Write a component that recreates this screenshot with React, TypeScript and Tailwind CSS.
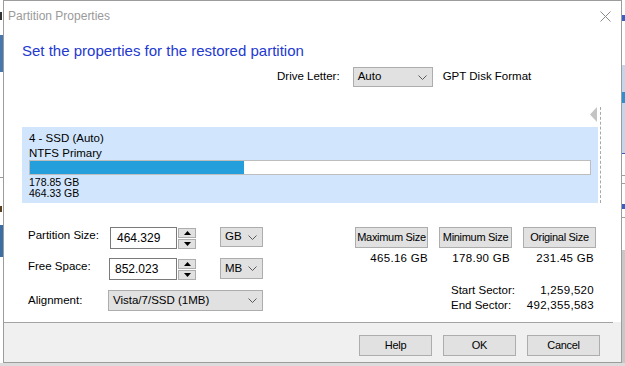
import React from "react";

function Chevron() {
  return (
    <svg width="9" height="5" viewBox="0 0 9 5" className="shrink-0">
      <path d="M0.5 0.5 L4.5 4.5 L8.5 0.5" fill="none" stroke="#5a5a5a" strokeWidth="1" />
    </svg>
  );
}

function Combo({ text, w, h }: { text: string; w: string; h: string }) {
  return (
    <div className={`${w} ${h} flex items-center justify-between pl-[4px] pr-[5px] bg-[#e1e1e1] border border-[#adadad] text-black whitespace-nowrap`}>
      <span>{text}</span>
      <Chevron />
    </div>
  );
}

function Spinner() {
  return (
    <div className="flex flex-col gap-[1px] self-center ml-[1px]">
      <div className="w-[18px] h-[10px] bg-[#e1e1e1] border border-[#adadad] flex items-center justify-center">
        <svg width="7" height="4" viewBox="0 0 7 4">
          <polygon points="0,4 3.5,0 7,4" fill="#000" />
        </svg>
      </div>
      <div className="w-[18px] h-[10px] bg-[#e1e1e1] border border-[#adadad] flex items-center justify-center">
        <svg width="7" height="4" viewBox="0 0 7 4">
          <polygon points="0,0 3.5,4 7,0" fill="#000" />
        </svg>
      </div>
    </div>
  );
}

function Btn({ text }: { text: string }) {
  return (
    <div className="w-[73px] h-[21px] flex items-center justify-center bg-[#e1e1e1] border border-[#adadad] text-black whitespace-nowrap text-[11px] tracking-[-0.3px]">
      {text}
    </div>
  );
}

export default function App() {
  return (
    <div className="w-[625px] h-[366px] flex flex-col bg-white overflow-hidden font-['Liberation_Sans',Arial,sans-serif] text-[11.5px] text-black leading-none">
      <div className="flex h-[363px]">
        {/* left background strip */}
        <div className="w-[3px] flex flex-col bg-white">
          <div className="h-[12px]" />
          <div className="h-[8px] w-[2px] bg-[#333]" />
          <div className="h-[15px]" />
          <div className="h-[37px] bg-[#4677ad]" />
          <div className="h-[105px]" />
          <div className="h-[1px] bg-[#9a9a9a]" />
          <div className="h-[28px]" />
          <div className="h-[6px] w-[2px] bg-[#5a4020]" />
          <div className="h-[13px]" />
          <div className="h-[32px] bg-[#3c6ea6]" />
          <div className="flex-1" />
        </div>

        {/* dialog */}
        <div className="w-[619px] h-[363px] flex flex-col border border-[#9c9c9c] bg-white">
          {/* title bar */}
          <div className="h-[29px] flex items-center justify-between pl-[4px] pr-[10px]">
            <span className="text-[12px] text-[#9a9a9a] mt-[1px]">Partition Properties</span>
            <svg width="11" height="11" viewBox="0 0 11 11" className="mt-[1px]">
              <path d="M0.5 0.5 L10.5 10.5 M10.5 0.5 L0.5 10.5" stroke="#8a8a8a" strokeWidth="1" />
            </svg>
          </div>

          {/* heading */}
          <div className="mt-[10px] pl-[18px] h-[20px] flex items-center text-[15px] text-[#2339d0]">
            Set the properties for the restored partition
          </div>

          {/* drive letter row */}
          <div className="mt-[7px] ml-[273px] h-[20px] flex items-center">
            <span>Drive Letter:</span>
            <div className="ml-[13px]">
              <Combo text="Auto" w="w-[80px]" h="h-[20px]" />
            </div>
            <span className="ml-[10px]">GPT Disk Format</span>
          </div>

          {/* partition map */}
          <div className="mt-[20px] ml-[18px] flex">
            <div className="w-[576px] flex flex-col">
              <div className="h-[20px] flex justify-end pr-[1px]">
                <svg width="7" height="15" viewBox="0 0 7 15">
                  <polygon points="7,0 0,7.5 7,15" fill="#c4c4c4" />
                </svg>
              </div>
              <div className="h-[76px] bg-[#d1e6fc] pt-[6px] px-[7px] flex flex-col">
                <div className="h-[12px] flex items-center">4 - SSD (Auto)</div>
                <div className="mt-[3px] h-[12px] flex items-center">NTFS Primary</div>
                <div className="h-[15px] flex border border-[#bdbdbd] bg-white">
                  <div className="w-[214px] h-full bg-[#259fdc]" />
                </div>
                <div className="mt-[2px] h-[11px] flex items-center text-[10.5px]">178.85 GB</div>
                <div className="h-[11px] flex items-center text-[10.5px]">464.33 GB</div>
              </div>
            </div>
            <div className="ml-[2px] w-0 border-l border-dashed border-[#a8a8a8]" />
          </div>

          {/* form */}
          <div className="mt-[24px] flex">
            <div className="ml-[24px] flex flex-col">
              <div className="h-[22px] flex">
                <div className="w-[82px] pt-[3px]">Partition Size:</div>
                <div className="w-[67px] h-[22px] border border-[#7a7a7a] bg-white flex items-center pl-[6px] text-[12px]">464.329</div>
                <Spinner />
                <div className="ml-[24px]">
                  <Combo text="GB" w="w-[43px]" h="h-[20px]" />
                </div>
              </div>
              <div className="mt-[9px] h-[22px] flex">
                <div className="w-[81px] pt-[3px]">Free Space:</div>
                <div className="w-[68px] h-[22px] border border-[#7a7a7a] bg-white flex items-center pl-[5px] text-[12px]">852.023</div>
                <Spinner />
                <div className="ml-[24px]">
                  <Combo text="MB" w="w-[43px]" h="h-[21px]" />
                </div>
              </div>
              <div className="mt-[10px] h-[21px] flex items-center">
                <div className="w-[80px]">Alignment:</div>
                <Combo text="Vista/7/SSD (1MB)" w="w-[155px]" h="h-[21px]" />
              </div>
            </div>

            <div className="ml-[92px] flex flex-col">
              <div className="flex gap-[11px]">
                <Btn text="Maximum Size" />
                <Btn text="Minimum Size" />
                <Btn text="Original Size" />
              </div>
              <div className="mt-[3px] flex gap-[11px] leading-[15px]">
                <div className="w-[73px] text-right tracking-[0.3px]">465.16 GB</div>
                <div className="w-[73px] text-right pr-[2px] tracking-[0.3px]">178.90 GB</div>
                <div className="w-[73px] text-right pr-[2px] tracking-[0.3px]">231.45 GB</div>
              </div>
              <div className="mt-[17px] ml-[96px] w-[143px] flex flex-col leading-[15px]">
                <div className="flex justify-between">
                  <span>Start Sector:</span>
                  <span className="tracking-[0.3px]">1,259,520</span>
                </div>
                <div className="flex justify-between">
                  <span>End Sector:</span>
                  <span className="tracking-[0.3px]">492,355,583</span>
                </div>
              </div>
            </div>
          </div>

          <div className="flex-1" />

          {/* footer */}
          <div className="flex flex-col bg-[#f0f0f0]">
            <div className="h-[1px] mr-[8px] bg-[#a3a3a3]" />
            <div className="h-[39px] flex justify-end gap-[11px] pr-[21px] pt-[12px]">
              <Btn text="Help" />
              <Btn text="OK" />
              <Btn text="Cancel" />
            </div>
          </div>
        </div>

        {/* right background strip */}
        <div className="w-[3px] flex flex-col bg-white">
          <div className="h-[15px]" />
          <div className="h-[6px] bg-[#3a5fc0]" />
          <div className="h-[44px]" />
          <div className="h-[27px] bg-[#c6d6ea]" />
          <div className="h-[11px] bg-[#2f8fd0]" />
          <div className="h-[50px] bg-[#c6d6ea]" />
          <div className="h-[1px] bg-[#3a5fc0]" />
          <div className="h-[21px]" />
          <div className="h-[1px] bg-[#a0a0a0]" />
          <div className="h-[7px]" />
          <div className="h-[1px] bg-[#a0a0a0]" />
          <div className="h-[20px]" />
          <div className="h-[5px] bg-[#3a5fc0]" />
          <div className="h-[8px]" />
          <div className="h-[1px] bg-[#a0a0a0]" />
          <div className="h-[32px]" />
          <div className="flex-1 bg-[#c8c8c8]" />
        </div>
      </div>
      <div className="h-[3px] bg-[#dcdcdc]" />
    </div>
  );
}
